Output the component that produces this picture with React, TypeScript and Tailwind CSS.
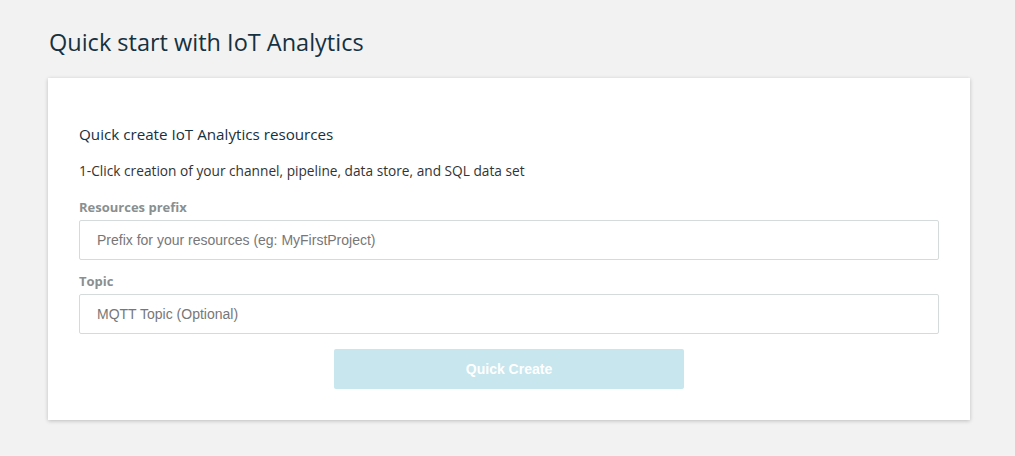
export default function App() {
  return (
    <div className="min-h-[456px] bg-[#f2f2f2] pl-[48px] pr-[45px] pt-[26px] font-['Open_Sans','Noto_Sans',sans-serif]">
      {/* Page title */}
      <h1 className="text-[23.5px] leading-[32px] text-[#16313f] font-normal pl-[1px]">Quick start with IoT Analytics</h1>

      {/* Card */}
      <div className="mt-[20px] bg-white shadow-[0_1px_4px_rgba(0,0,0,0.22)] px-[31px] pt-[46px] pb-[31px]">
        <h2 className="text-[15.2px] leading-[20px] text-[#16313f]">Quick create IoT Analytics resources</h2>
        <p className="mt-[18px] text-[13.7px] leading-[18px] text-[#333]">
          1-Click creation of your channel, pipeline, data store, and SQL data set
        </p>

        <div className="mt-[18px]">
          <label className="block text-[13px] leading-[18px] font-bold text-[#8a8f90]">Resources prefix</label>
          <input
            className="mt-[4px] block w-full h-[40px] border border-[#d5dbdb] rounded-[2px] px-[17px] text-[14px] font-['Liberation_Sans',Arial,sans-serif] placeholder:text-[#777] outline-none"
            placeholder="Prefix for your resources (eg: MyFirstProject)"
          />
        </div>

        <div className="mt-[12px]">
          <label className="block text-[13px] leading-[18px] font-bold text-[#8a8f90]">Topic</label>
          <input
            className="mt-[4px] block w-full h-[40px] border border-[#d5dbdb] rounded-[2px] px-[17px] text-[14px] font-['Liberation_Sans',Arial,sans-serif] placeholder:text-[#777] outline-none"
            placeholder="MQTT Topic (Optional)"
          />
        </div>

        <div className="mt-[15px] flex justify-center">
          <button
            disabled
            className="w-[350px] h-[40px] rounded-[2px] bg-[#c7e6ee] text-white font-bold text-[14px] font-['Liberation_Sans',Arial,sans-serif]"
          >
            Quick Create
          </button>
        </div>
      </div>
    </div>
  )
}
